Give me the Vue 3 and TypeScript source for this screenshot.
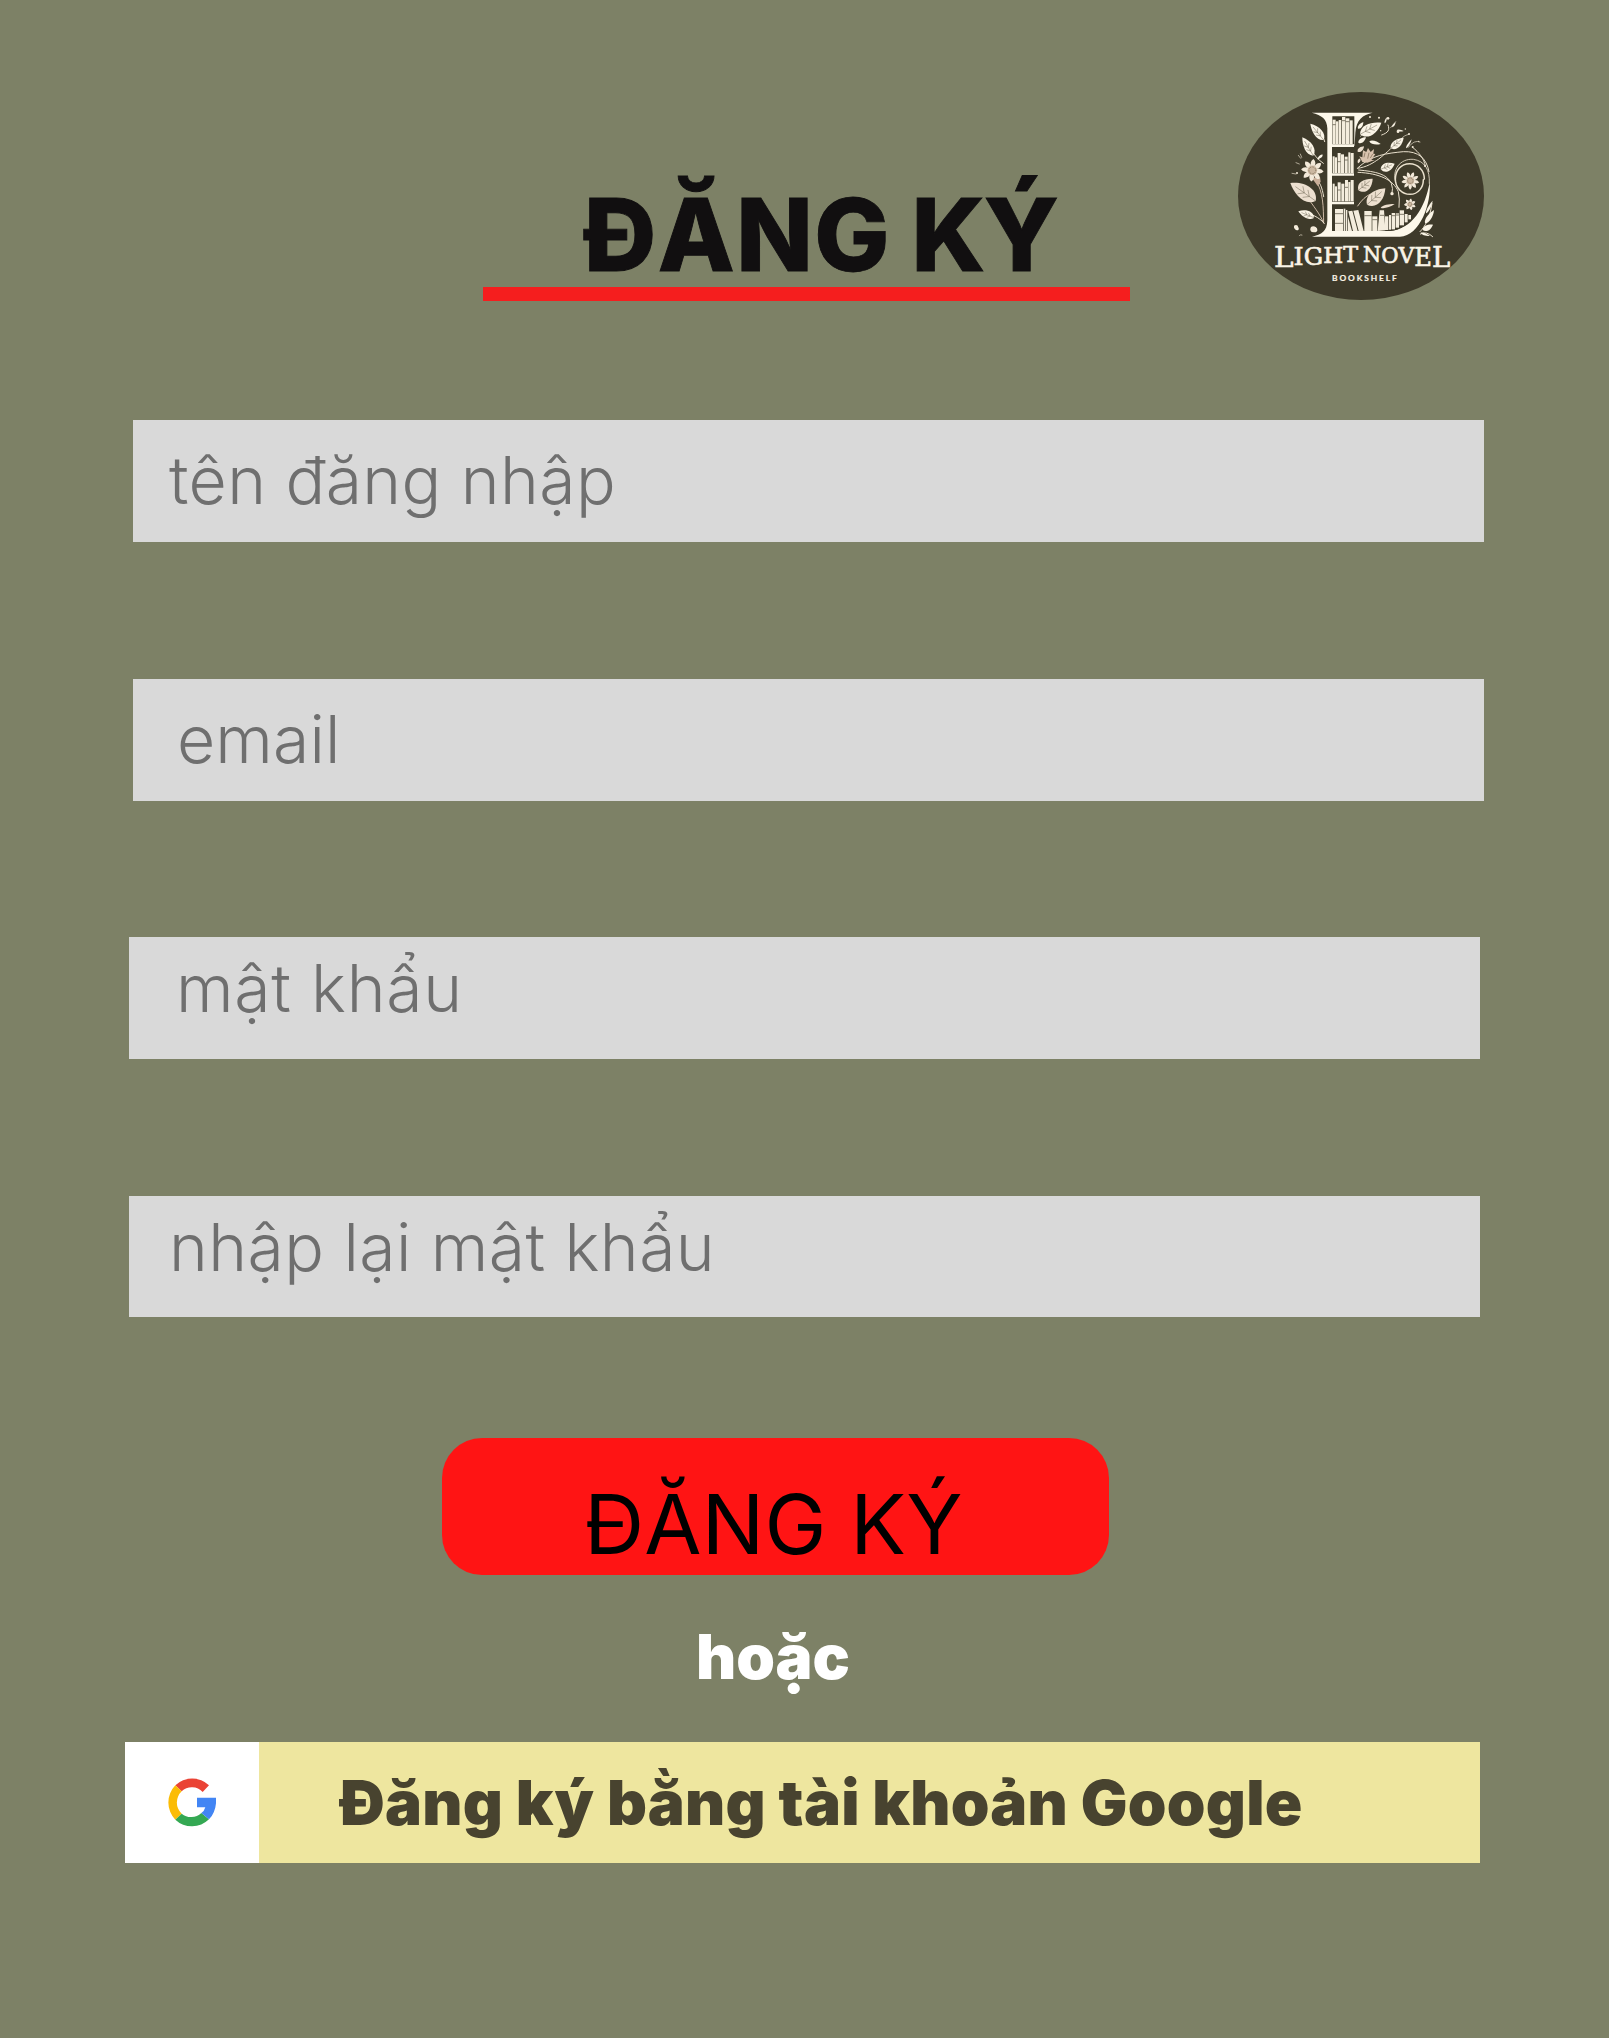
<script setup lang="ts">
interface Field {
  id: string
  label: string
}

const fields: Field[] = [
  { id: 'username', label: 'tên đăng nhập' },
  { id: 'email', label: 'email' },
  { id: 'password', label: 'mật khẩu' },
  { id: 'confirm', label: 'nhập lại mật khẩu' },
]

type Leaf = [x1: number, y1: number, x2: number, y2: number, width: number, blush?: boolean]

// Each leaf runs from its base to its tip
const leaves: Leaf[] = [
  [281, 180, 241, 131, 27],
  [250, 227, 217, 172, 28],
  [257, 363, 181, 309, 46, true],
  [252, 413, 205, 394, 24],
  [390, 163, 454, 128, 37],
  [482, 205, 521, 173, 25],
  [452, 268, 494, 251, 27],
  [385, 331, 428, 296, 34, true],
  [411, 374, 466, 325, 40, true],
  [385, 188, 408, 172, 13],
  [383, 215, 402, 199, 13, true],
  [384, 146, 400, 126, 11],
  [418, 184, 452, 192, 11],
  [585, 430, 612, 390, 15],
  [578, 450, 609, 434, 17],
  [588, 400, 608, 362, 8],
  [572, 458, 600, 468, 7],
  [262, 452, 243, 446, 16],
  [205, 450, 192, 437, 12],
  [464, 130, 470, 112, 5],
  [500, 150, 521, 153, 6],
  [486, 142, 497, 127, 5],
  [452, 383, 494, 372, 9, true],
  [528, 205, 545, 178, 6],
  [390, 236, 384, 250, 8, true],
  [278, 224, 262, 238, 8],
]

function leafPath([x1, y1, x2, y2, w]: Leaf): string {
  const dx = x2 - x1
  const dy = y2 - y1
  const len = Math.hypot(dx, dy)
  const nx = (-dy / len) * w * 0.72
  const ny = (dx / len) * w * 0.72
  const p = (t: number, s: number) => `${(x1 + dx * t + nx * s).toFixed(1)},${(y1 + dy * t + ny * s).toFixed(1)}`
  return `M${x1},${y1} C${p(0.15, 1)} ${p(0.65, 0.9)} ${x2},${y2} C${p(0.7, -0.6)} ${p(0.2, -1)} ${x1},${y1}Z`
}

function veinPath([x1, y1, x2, y2, w]: Leaf): string {
  const dx = x2 - x1
  const dy = y2 - y1
  const len = Math.hypot(dx, dy)
  const nx = (-dy / len) * w * 0.3
  const ny = (dx / len) * w * 0.3
  let d = `M${x1},${y1} L${x1 + dx * 0.8},${y1 + dy * 0.8}`
  for (const t of [0.25, 0.45]) {
    const bx = x1 + dx * t
    const by = y1 + dy * t
    d += ` M${bx},${by} L${bx + dx * 0.16 + nx},${by + dy * 0.16 + ny}`
    d += ` M${bx},${by} L${bx + dx * 0.16 - nx},${by + dy * 0.16 - ny}`
  }
  return d
}

interface Flower {
  x: number
  y: number
  r: number
  petals: number
  turn: number
}

const flowers: Flower[] = [
  { x: 247, y: 271, r: 34, petals: 8, turn: 0.1 },
  { x: 541, y: 302, r: 27, petals: 9, turn: 0.2 },
  { x: 540, y: 373, r: 18, petals: 7, turn: 0.4 },
]

function petals(f: Flower): string {
  let d = ''
  for (let i = 0; i < f.petals; i++) {
    const a = f.turn + (i * 2 * Math.PI) / f.petals
    const s = Math.PI / f.petals
    const at = (ang: number, k: number) => `${(f.x + Math.cos(ang) * f.r * k).toFixed(1)},${(f.y + Math.sin(ang) * f.r * k).toFixed(1)}`
    d += `M${at(a - s, 0.35)} Q${at(a - s * 1.1, 0.8)} ${at(a, 1)} Q${at(a + s * 1.1, 0.8)} ${at(a + s, 0.35)} Z `
  }
  return d
}

type Book = [x: number, top: number, width: number, bottom: number]

const books: Book[] = [
  [308, 119, 9, 192], [318, 124, 7, 192], [326, 120, 8, 192], [336, 111, 10, 192], [347, 115, 11, 192], [359, 121, 9, 192],
  [308, 229, 6, 279], [315, 232, 6, 279], [323, 219, 9, 279], [333, 223, 9, 279], [344, 230, 9, 279], [355, 217, 6, 279], [362, 219, 9, 279],
  [308, 311, 6, 364], [315, 319, 6, 364], [323, 307, 9, 364], [334, 311, 9, 364], [345, 300, 9, 364], [355, 306, 6, 364], [362, 300, 9, 364],
  [315, 387, 24, 453], [341, 386, 5, 453], [348, 390, 4, 453],
  [403, 393, 22, 453], [427, 409, 15, 453], [465, 409, 10, 450], [477, 405, 6, 449], [485, 399, 10, 448],
  [497, 400, 10, 443], [509, 391, 13, 436], [524, 402, 9, 427], [535, 405, 8, 418],
]
const leaning = ['355,394 367,392 383,453 369,453', '370,392 385,390 401,453 386,453', '449,391 462,391 466,451 443,453', '354,410 366,453 354,453']

const dots: [number, number, number][] = [
  [474, 115, 4], [504, 155, 4], [537, 162, 3], [548, 201, 3], [486, 341, 5], [447, 113, 3],
  [420, 111, 3], [201, 279, 3], [198, 441, 6], [250, 448, 9], [452, 152, 2], [566, 184, 2], [526, 147, 2], [585, 258, 3],
]
</script>

<template>
  <main class="page">
    <header class="header">
      <h1 class="title">ĐĂNG <span class="tight">KÝ</span></h1>
      <svg class="logo" viewBox="24 36 738 624" preserveAspectRatio="none" role="img" aria-label="Light Novel Bookshelf">
        <ellipse cx="393" cy="348" rx="369" ry="312" fill="#3e3a2a" />

        <!-- Stems and scrolls -->
        <g fill="none" stroke="#e9e0cd" stroke-width="3" stroke-linecap="round">
          <path d="M284,185 C277,160 268,150 262,143" />
          <path d="M280,250 C262,238 250,222 238,200" />
          <path d="M258,303 C280,335 280,380 281,430 C270,400 250,380 228,345" stroke="#cbb7a3" />
          <path d="M283,430 C265,410 245,402 225,400" />
          <path d="M281,350 C276,320 270,310 262,300" />
          <path d="M384,263 C425,225 470,220 520,215 C565,213 590,235 597,275" />
          <path d="M382,265 C410,262 430,248 445,238 C470,218 476,212 490,198" />
          <path d="M386,270 C440,275 470,282 484,310 Q490,326 486,340" />
          <path d="M384,277 C450,280 490,300 505,335 Q510,355 507,382" />
          <path d="M583,297 C583,270 563,251 539,251 C512,251 496,272 496,298 C496,323 516,343 540,343 C565,343 580,322 580,299" stroke-width="4.5" />
          <path d="M497,307 C485,270 510,235 550,238 C585,243 600,270 598,310" stroke-width="2.5" />
          <path d="M548,202 C567,218 582,235 586,258" />
          <path d="M455,165 C475,158 480,150 474,135" />
          <path d="M482,143 L497,125 M512,178 C520,168 528,165 537,163 M535,202 Q552,178 570,186" stroke-width="2" />
          <path d="M570,455 C585,440 600,415 606,370 M571,462 Q590,452 608,470" />
          <path d="M198,248 L208,252 M205,226 L212,235 M211,222 L215,232 M186,280 L198,282" stroke-width="2" />
          <path d="M383,378 Q402,350 420,343 M386,327 Q400,308 414,305" stroke="#d8c6b3" />
          <path d="M391,169 Q410,150 433,142 M208,467 Q210,462 216,465" stroke-width="2" />
        </g>

        <path v-for="(l, i) in leaves" :key="'l' + i" :d="leafPath(l)" :fill="l[5] ? '#ecdfcf' : '#faf4e6'" />
        <path v-for="(l, i) in leaves.filter((v) => v[4] > 17)" :key="'v' + i" :d="veinPath(l)" fill="none" stroke="#564f3d" stroke-width="1.3" />

        <!-- Tulip and bud -->
        <path d="M388,229 L397,232 L399,211 L409,216 L414,204 L422,216 L432,207 L430,221 L436,222 L424,240 L434,240 L412,248 L397,246 Z" fill="#d9c3ae" />
        <path d="M402,232 L405,218 M413,236 L417,218 M421,234 L428,222" stroke="#75634f" stroke-width="2" />
        <path d="M247,296 L257,291 L270,290 L272,305 L263,318 L256,308 Z" fill="#c9ae98" />

        <g v-for="(f, i) in flowers" :key="'f' + i">
          <path :d="petals(f)" fill="#f3e9d9" />
          <circle :cx="f.x" :cy="f.y" :r="f.r * 0.42" fill="#cbb7a0" />
          <circle :cx="f.x" :cy="f.y" :r="f.r * 0.3" fill="none" stroke="#75664f" stroke-width="2.5" stroke-dasharray="2.5 2.5" />
        </g>
        <circle v-for="(d, i) in dots" :key="'d' + i" :cx="d[0]" :cy="d[1]" :r="d[2]" fill="#f3ead9" />

        <!-- Monogram -->
        <path d="M245,98 H428 C398,104 379,119 376,158 Q375,180 373,198 H306 V453 H480 C545,447 586,385 599,305 C605,370 570,468 510,470 H246 C275,463 291,455 292,420 V145 C291,117 276,106 245,98Z" fill="#fdf8ea" />
        <path d="M307,109 H373 V193 H307Z M307,202 H373 V281 H307Z M307,289 H373 V365 H307Z M314,375 H372 V384 H314Z" fill="#3e3a2a" />
        <path d="M306,194 H372 V201 H306Z M306,280 H372 V287 H306Z M306,365 H372 V373 H306Z" fill="#fdf8ea" />
        <path d="M313,384 H352 L475,411 L551,399 C540,430 515,450 480,453 H313Z" fill="#3e3a2a" />
        <g fill="#f4eddd">
          <rect v-for="(b, i) in books" :key="'b' + i" :x="b[0]" :y="b[1]" :width="b[2]" :height="b[3] - b[1]" />
          <polygon v-for="p in leaning" :key="p" :points="p" />
        </g>
        <path d="M308,134 H317 M336,122 H346 M347,125 H358 M323,245 H332 M344,240 H353 M323,330 H332 M345,322 H354 M315,401 H339 M315,430 H339 M403,407 H425 M427,419 H442 M450,406 H462 M497,405 H507 M509,403 H522 M485,407 H495" fill="none" stroke="#4a4433" stroke-width="2" />

        <g fill="#faf4e6" stroke="#faf4e6">
          <text class="name" x="132" y="561" textLength="252" lengthAdjust="spacingAndGlyphs"><tspan font-size="86">L</tspan><tspan dy="-5" font-size="75">I</tspan><tspan dy="-2" font-size="71">G</tspan><tspan dy="-5" font-size="67">H</tspan><tspan dy="-2" font-size="65">T</tspan></text>
          <text class="name" x="399" y="547" textLength="262" lengthAdjust="spacingAndGlyphs"><tspan font-size="65">N</tspan><tspan dy="1" font-size="66">O</tspan><tspan dy="2" font-size="69">V</tspan><tspan dy="7" font-size="76">E</tspan><tspan dy="5" font-size="86">L</tspan></text>
          <text class="sub" x="306" y="602" textLength="194">BOOKSHELF</text>
        </g>
      </svg>
    </header>
    <div class="rule"></div>

    <form class="form" @submit.prevent>
      <label v-for="f in fields" :key="f.id" class="field" :class="f.id">{{ f.label }}</label>
      <button class="submit" type="submit">ĐĂNG KÝ</button>
      <p class="or">hoặc</p>
      <div class="google">
        <span class="mark">
          <svg viewBox="159 144 144 147" width="48" height="49" aria-hidden="true">
            <path fill="#ea4335" d="M181,166 A73,73.5 0 0 1 282,166 L263,186 A44.5,44.5 0 0 0 200,184Z" />
            <path fill="#fbbc05" d="M181,166 A73,73.5 0 0 0 181,269 L200,251 A46,46 0 0 1 200,184Z" />
            <path fill="#34a853" d="M181,269 A73,73.5 0 0 0 282,268 L259,249 A44.5,44.5 0 0 1 200,251Z" />
            <path fill="#4285f4" d="M246,203 H303 C305,229 298,252 282,268 L259,249 Q268,243 271,232 H246Z" />
          </svg>
        </span>
        <span class="google-label">Đăng ký bằng tài khoản Google</span>
      </div>
    </form>
  </main>
</template>

<style>
body {
  background: #7d8166;
}
</style>

<style scoped>
.page {
  box-sizing: border-box;
  width: 1609px;
  height: 2038px;
  background: #7d8166;
  font-family: Inter, sans-serif;
  overflow: hidden;
}

.header {
  display: flex;
  justify-content: space-between;
  align-items: flex-start;
  box-sizing: border-box;
  height: 287px;
  padding: 92px 125px 0 584px;
}

.title {
  margin: 82px 0 0;
  font-size: 100px;
  font-weight: 800;
  line-height: 121px;
  letter-spacing: 1.5px;
  word-spacing: -3px;
  color: #110f10;
  white-space: nowrap;
  -webkit-text-stroke: 0.9px #110f10;
}

.tight {
  letter-spacing: -1.5px;
}

.logo {
  flex: none;
  width: 246px;
  height: 208px;
}

.name {
  font: 400 70px "DejaVu Serif Condensed", "DejaVu Serif", serif;
  stroke-width: 1.8;
}

.sub {
  font: 700 25px Lato, sans-serif;
  stroke-width: 0.6;
}

.rule {
  width: 647px;
  height: 14px;
  margin-left: 483px;
  background: #f51e1e;
}

.form {
  display: flex;
  flex-direction: column;
  align-items: flex-start;
  padding-top: 119px;
}

.field {
  box-sizing: border-box;
  width: 1351px;
  height: 122px;
  margin: 0 0 137px 133px;
  padding-left: 36px;
  background: #d9d9d9;
  color: #6f6f6f;
  font-size: 66px;
  font-weight: 300;
  line-height: 120px;
  letter-spacing: 0.43px;
  white-space: nowrap;
}

.email {
  margin-bottom: 136px;
  padding-left: 44px;
  letter-spacing: 0.12px;
}

.password,
.confirm {
  margin-left: 129px;
  line-height: 103px;
}

.password {
  padding-left: 47px;
  letter-spacing: 0.74px;
}

.confirm {
  height: 121px;
  margin-bottom: 121px;
  padding-left: 40px;
  line-height: 102px;
}

.submit {
  box-sizing: border-box;
  width: 667px;
  height: 137px;
  margin-left: 442px;
  padding: 34px 4px 0 0;
  border: 0;
  border-radius: 40px;
  background: #ff1414;
  color: #000;
  font: 400 83px/102px Inter, sans-serif;
  letter-spacing: 0.23px;
}

.or {
  margin: 33px 0 0 696px;
  color: #fff;
  font-size: 62px;
  font-weight: 900;
  line-height: 98px;
}

.google {
  display: flex;
  width: 1355px;
  height: 121px;
  margin: 36px 0 0 125px;
  background: #eee69f;
}

.mark {
  display: flex;
  box-sizing: border-box;
  flex: none;
  align-items: center;
  justify-content: center;
  width: 134px;
  padding-right: 1px;
  background: #fff;
}

.google-label {
  padding-left: 81px;
  color: #48432f;
  font-size: 62px;
  font-weight: 900;
  line-height: 121px;
  letter-spacing: 0.26px;
  white-space: nowrap;
}
</style>
